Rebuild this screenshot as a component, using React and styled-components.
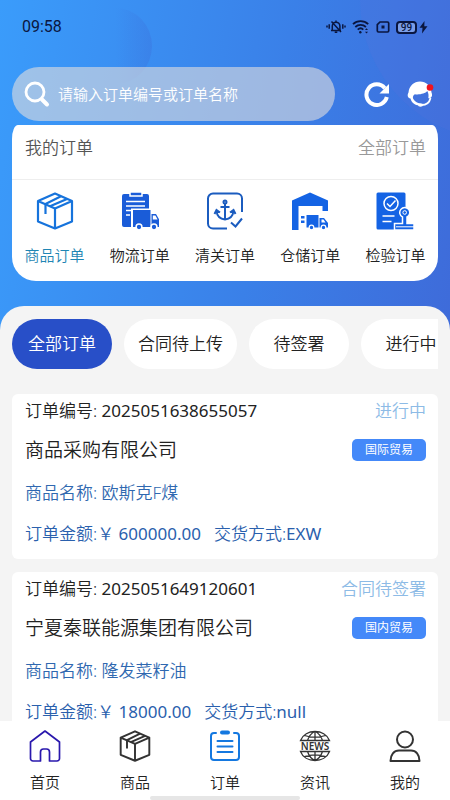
import styled, { createGlobalStyle } from "styled-components";
import { useState } from "react";

const SERVICES = [
  { label: "商品订单", Icon: BoxIcon },
  { label: "物流订单", Icon: LogisticsIcon },
  { label: "清关订单", Icon: CustomsIcon },
  { label: "仓储订单", Icon: WarehouseIcon },
  { label: "检验订单", Icon: InspectionIcon },
];

const FILTERS = ["全部订单", "合同待上传", "待签署", "进行中"];

const ORDERS = [
  {
    id: "2025051638655057",
    status: "进行中",
    company: "商品采购有限公司",
    trade: "国际贸易",
    goods: "欧斯克F煤",
    amount: "600000.00",
    delivery: "EXW",
  },
  {
    id: "2025051649120601",
    status: "合同待签署",
    company: "宁夏秦联能源集团有限公司",
    trade: "国内贸易",
    goods: "隆发菜籽油",
    amount: "18000.00",
    delivery: "null",
  },
];

const TABS = [
  { label: "首页", Icon: HomeIcon },
  { label: "商品", Icon: GoodsIcon },
  { label: "订单", Icon: OrderIcon },
  { label: "资讯", Icon: NewsIcon },
  { label: "我的", Icon: UserIcon },
];

const App = () => {
  const [service, setService] = useState(0);
  const [filter, setFilter] = useState(0);

  return (
    <Page>
      <GlobalStyle />
      <StatusBar />

      <Header>
        <SearchBox>
          <SearchIcon />
          <input
            type="text"
            aria-label="搜索订单"
            placeholder="请输入订单编号或订单名称"
          />
        </SearchBox>
        <IconButton aria-label="刷新">
          <RefreshIcon />
        </IconButton>
        <IconButton aria-label="客服">
          <ServiceIcon />
        </IconButton>
      </Header>

      <ServiceCard>
        <CardHead>
          <h2>我的订单</h2>
          <a href="#all">全部订单</a>
        </CardHead>
        <ServiceGrid>
          {SERVICES.map(({ label, Icon }, i) => (
            <ServiceButton
              key={label}
              $active={service === i}
              onClick={() => setService(i)}
            >
              <Icon />
              <span>{label}</span>
            </ServiceButton>
          ))}
        </ServiceGrid>
      </ServiceCard>

      <Panel>
        <Filters>
          {FILTERS.map((label, i) => (
            <Pill
              key={label}
              $active={filter === i}
              onClick={() => setFilter(i)}
            >
              {label}
            </Pill>
          ))}
        </Filters>
        <OrderList>
          {ORDERS.map((order) => (
            <Order key={order.id} order={order} />
          ))}
        </OrderList>
      </Panel>

      <TabBar>
        {TABS.map(({ label, Icon }) => (
          <Tab key={label} href={`#${label}`}>
            <Icon />
            <span>{label}</span>
          </Tab>
        ))}
        <HomeIndicator />
      </TabBar>
    </Page>
  );
};

const Order = ({ order }) => (
  <OrderCard>
    <NumberRow>
      <span>
        订单编号: <Value>{order.id}</Value>
      </span>
      <Status>{order.status}</Status>
    </NumberRow>
    <CompanyRow>
      <h3>{order.company}</h3>
      <Tag>{order.trade}</Tag>
    </CompanyRow>
    <GoodsRow>商品名称: {order.goods}</GoodsRow>
    <AmountRow>
      <span>
        订单金额:￥ <Value>{order.amount}</Value>
      </span>
      <span>
        交货方式:<Value>{order.delivery}</Value>
      </span>
    </AmountRow>
  </OrderCard>
);

const StatusBar = () => (
  <StyledStatusBar>
    <time>09:58</time>
    <div className="icons">
      <svg width="20" height="16" viewBox="0 0 20 16" fill="none" stroke="#0a1640" strokeWidth="1.5">
        <path d="M5 11.5h10M6.3 11V7a3.8 3.8 0 0 1 7.6 0v4M10 3V1.5M8.7 13.3h2.6M5.5 2.5l9.5 10.5M3.2 5.3v4.4M1 6.5v2M16.8 5.3v4.4M19 6.5v2" />
      </svg>
      <svg width="18" height="16" viewBox="0 0 18 16" fill="none" stroke="#0a1640" strokeWidth="1.8">
        <path d="M1 5.2c4.2-4 11-4 15.2 0M3.3 8c3-2.8 7.6-2.8 10.6 0M5.7 10.6c1.8-1.6 4-1.6 5.6 0" />
        <circle cx="8.3" cy="13.3" r="1.2" fill="#0a1640" stroke="none" />
        <path d="M13 11l1.5-1.8L16 11zM13 12.8l1.5 1.8 1.5-1.8z" fill="#0a1640" stroke="none" />
      </svg>
      <svg width="14" height="16" viewBox="0 0 14 16" fill="none" stroke="#0a1640" strokeWidth="1.7">
        <path d="M4 3h7.5a1.2 1.2 0 0 1 1.2 1.2v7.6a1.2 1.2 0 0 1-1.2 1.2h-9a1.2 1.2 0 0 1-1.2-1.2V5.7z" />
        <path d="M5.5 6.5h3v3h-3z" fill="#0a1640" stroke="none" />
      </svg>
      <Battery>99</Battery>
      <svg className="bolt" width="9" height="16" viewBox="0 0 9 16">
        <path d="M5.5 2L.5 8.800h3L3 14.5l5.5-7.3H5.3z" fill="#0a1640" />
      </svg>
    </div>
  </StyledStatusBar>
);

function SearchIcon() {
  return (
    <svg width="26" height="27" viewBox="0 0 26 27" fill="none" stroke="#fff" strokeLinecap="round">
      <circle cx="11" cy="11" r="9" strokeWidth="2.8" />
      <path d="M18 18.5l5 5" strokeWidth="4" />
    </svg>
  );
}

function RefreshIcon() {
  return (
    <svg width="26" height="26" viewBox="0 0 26 26">
      <path d="M20.8 7.2A10.3 10.3 0 1 0 22.8 16" fill="none" stroke="#fff" strokeWidth="4" />
      <path d="M25 3v9.5h-9.5z" fill="#fff" />
    </svg>
  );
}

function ServiceIcon() {
  return (
    <svg width="28" height="28" viewBox="0 0 28 28">
      <path
        d="M4.500 18.500C1.500 18 1 15 2.500 12.500 3 6 8 1.500 14 1.500s11 4 11.500 11c1 2 .8 4.500-1.200 5.500l-2 .3c.5-2.800.3-5-1-7.300-2 2.500-8 4-12.500 3.200C6.500 15.500 6.300 18 8 20c1.500 2 3.500 3 6 3.500l-1 2c-2-.3-3.500-.8-5-1.800-1.800-1.200-3-3-3.500-5.200z"
        fill="#fff"
      />
      <path d="M24.5 18c-1 4.500-4 7-9 7" fill="none" stroke="#fff" strokeWidth="1.8" />
      <ellipse cx="14.5" cy="25" rx="2.5" ry="1.7" fill="#fff" />
      <circle cx="24" cy="7.5" r="3.3" fill="#f0141e" />
    </svg>
  );
}

function Cube({ size, color, width }) {
  return (
    <svg width={size} height={size} viewBox="0 0 38 38" fill="none" stroke={color} strokeWidth={width} strokeLinejoin="round">
      <path d="M19 1.5L36 9v20.5l-17 7-17-7V9zM2 9l17 7.5L36 9M19 16.5v20" />
      <path d="M25 4.2L9.5 12v10M31 6.9L14 14.3" />
    </svg>
  );
}

function BoxIcon() {
  return <Cube size={38} color="#1673dc" width={2.2} />;
}

function GoodsIcon() {
  return <Cube size={32} color="#333" width={2.3} />;
}

function LogisticsIcon() {
  return (
    <svg width="38" height="38" viewBox="0 0 38 38" fill="#1a5cd8">
      <path d="M3 2h23a2 2 0 0 1 2 2v14H12v17H3a2 2 0 0 1-2-2V4a2 2 0 0 1 2-2z" />
      <path d="M9 0h12v4H9z" stroke="#fff" strokeWidth="1.5" />
      <path d="M5 9.5h19M5 14h19M5 18.5h5M5 23h4" stroke="#fff" strokeWidth="1.6" />
      <path d="M10 16.5h21V36H10z" fill="#fff" />
      <path d="M12 18h17.5v17H12zM30.5 22H35l3.5 6v7h-8z" />
      <path d="M31.8 23.5h2.6l2.2 4h-4.8z" fill="#fff" />
      <g stroke="#fff" strokeWidth="1.5">
        <circle cx="18" cy="35" r="2.9" />
        <circle cx="33" cy="35" r="2.9" />
      </g>
    </svg>
  );
}

function CustomsIcon() {
  return (
    <svg width="38" height="38" viewBox="0 0 38 38" fill="none" stroke="#1b5cbf" strokeWidth="2">
      <path d="M21 36.5H7a5 5 0 0 1-5-5V6.5a5 5 0 0 1 5-5h24a5 5 0 0 1 5 5V20" />
      <circle cx="19" cy="10" r="1.5" />
      <path d="M19 11.5V28.5M14.5 15h9M10.5 19c.5 5 3.5 8 8.5 8.500 5-.5 8-3.5 8.500-8.500M8.500 22l2-4 3.500 2.500M29.500 22l-2-4-3.500 2.500M25 30.500l4.500 4 6.500-8" />
    </svg>
  );
}

function WarehouseIcon() {
  return (
    <svg width="38" height="38" viewBox="0 0 38 38" fill="#1463e4">
      <path d="M1 8.5L19 .5l18 8V19h-5.5v-5H7.5v24H1z" />
      <path d="M10 24h3.5v2.5H10zM10 28.5h3.5v2.5H10zM15.5 23h12v12.5h-12zM28.5 26h4.5l4 5v4.5h-8.5z" />
      <path d="M30.5 27.5h2l2 3h-4z" fill="#fff" />
      <g stroke="#fff" strokeWidth="1.2">
        <circle cx="20.5" cy="35.5" r="2.3" />
        <circle cx="32.5" cy="35.5" r="2.3" />
      </g>
    </svg>
  );
}

function InspectionIcon() {
  return (
    <svg width="38" height="38" viewBox="0 0 38 38" fill="#1463e4">
      <path d="M2 .5h26a1.500 1.500 0 0 1 1.500 1.500v35.500H2A1.500 1.500 0 0 1 .5 36V2A1.500 1.500 0 0 1 2 .5z" />
      <g fill="none" stroke="#fff" strokeWidth="1.5">
        <circle cx="15" cy="11.5" r="7" />
        <path d="M11 11.5l3 3 5.500-6M6.5 24h12M6.5 29.5h9" />
      </g>
      <path d="M26.5 25a5 5 0 1 1 4.500 0v6.500h7V38H18.500v-6.500h8z" stroke="#fff" strokeWidth="1.5" />
      <circle cx="28.7" cy="20.5" r="1.8" fill="none" stroke="#fff" />
      <path d="M20 34.8h18" stroke="#fff" />
    </svg>
  );
}

function HomeIcon() {
  return (
    <svg width="32" height="32" viewBox="0 0 32 32" fill="none" stroke="#2a18ad" strokeWidth="1.7" strokeLinejoin="round">
      <path d="M16 1L1.5 12v16.5a2.5 2.5 0 0 0 2.5 2.5h7.5V22a3 3 0 0 1 3-3h3a3 3 0 0 1 3 3v9H28a2.5 2.5 0 0 0 2.5-2.5V12z" />
    </svg>
  );
}

function OrderIcon() {
  return (
    <svg width="32" height="32" viewBox="0 0 32 32" fill="none" stroke="#1478e0" strokeWidth="2" strokeLinecap="round">
      <path d="M7 3H5a3 3 0 0 0-3 3v21a3 3 0 0 0 3 3h22a3 3 0 0 0 3-3V6a3 3 0 0 0-3-3h-2" />
      <path d="M13 2.5h6" strokeWidth="4" />
      <path d="M8.5 11h15M8.5 16.5h15M8.5 22h15" />
    </svg>
  );
}

function NewsIcon() {
  return (
    <svg width="32" height="32" viewBox="0 0 32 32" fill="none" stroke="#333" strokeWidth="1.3">
      <path d="M1.5 10.5C6-1.5 26-1.5 30.5 10.5zM1.5 21.5c4.5 12 24.5 12 29 0zM16 1.5v9M16 21.5v9M8.5 10.5C10 6 12.5 3 16 1.5c3.5 1.5 6 4.5 7.5 9M8.5 21.5c1.5 4.5 4 7.5 7.5 9 3.5-1.5 6-4.5 7.5-9M5.5 5.5c6 2 15 2 21 0M5.5 26.5c6-2 15-2 21 0" />
      <text x="16" y="20" textAnchor="middle" fontSize="10" fontWeight="600" fontFamily="Noto Sans, sans-serif" fill="#333" stroke="none">
        NEWS
      </text>
    </svg>
  );
}

function UserIcon() {
  return (
    <svg width="32" height="32" viewBox="0 0 32 32" fill="none" stroke="#333" strokeWidth="2" strokeLinejoin="round">
      <circle cx="16" cy="9.5" r="8" />
      <path d="M1.5 31c0-6.5 3.5-10.5 8.5-10.5h12c5 0 8.5 4 8.5 10.5z" />
    </svg>
  );
}

const GlobalStyle = createGlobalStyle`
  * {
    box-sizing: border-box;
    margin: 0;
    padding: 0;
  }

  body {
    font-family: "Noto Sans", "Noto Sans CJK SC", sans-serif;
    font-weight: 350;
    color: #222;
  }

  button {
    border: none;
    background: none;
    font: inherit;
    color: inherit;
    cursor: pointer;
  }

  a {
    color: inherit;
    text-decoration: none;
  }

  h2,
  h3 {
    font-weight: inherit;
  }

  svg {
    display: block;
    flex-shrink: 0;
  }
`;

const Page = styled.div`
  position: relative;
  isolation: isolate;
  display: flex;
  flex-direction: column;
  height: 100vh;
  overflow: hidden;
  background: linear-gradient(100deg, #3a9cfb 0%, #3a80e8 50%, #4063d4 100%);

  /* soft bubbles behind the header */
  &::before,
  &::after {
    content: "";
    position: absolute;
    z-index: -1;
    border-radius: 50%;
  }

  &::before {
    top: 8px;
    left: 80px;
    width: 72px;
    height: 76px;
    background: linear-gradient(
      to right,
      transparent 50%,
      rgba(60, 105, 215, 0.3)
    );
  }

  &::after {
    top: -140px;
    right: -190px;
    width: 280px;
    height: 280px;
    background: rgba(90, 115, 220, 0.2);
  }
`;

const StyledStatusBar = styled.div`
  display: flex;
  align-items: center;
  justify-content: space-between;
  height: 54px;
  padding: 0 22px;
  color: #0a1640;

  time {
    font-family: Roboto, sans-serif;
    font-weight: 400;
    font-size: 16px;
    line-height: 24px;
  }

  .icons {
    display: flex;
    align-items: center;
    gap: 6px;
  }

  .bolt {
    margin-left: -4px;
  }
`;

const Battery = styled.span`
  width: 21px;
  height: 13px;
  border: 2px solid #0a1640;
  border-radius: 4px;
  background: rgba(255, 255, 255, 0.3);
  font-family: Roboto, sans-serif;
  font-weight: 500;
  font-size: 10px;
  line-height: 10px;
  text-align: center;
`;

const Header = styled.header`
  display: flex;
  align-items: center;
  padding: 13px 16px 4px 12px;
`;

const SearchBox = styled.label`
  display: flex;
  align-items: center;
  flex: 1;
  gap: 8px;
  height: 54px;
  margin-right: 13px;
  padding: 0 12px;
  border-radius: 27px;
  background: rgba(225, 222, 222, 0.6);

  input {
    flex: 1;
    min-width: 0;
    border: none;
    outline: none;
    background: none;
    color: #fff;
    font: inherit;
    font-size: 15px;
    line-height: 24px;

    &::placeholder {
      color: #fff;
      opacity: 1;
    }
  }
`;

const IconButton = styled.button`
  margin-left: 16px;
`;

const ServiceCard = styled.section`
  flex-shrink: 0;
  margin: 0 12px 25px;
  border-radius: 6px 6px 24px 24px / 14px 14px 24px 24px;
  background: #fff;
`;

const CardHead = styled.div`
  display: flex;
  justify-content: space-between;
  height: 55px;
  padding: 10px 12px 0 13px;
  border-bottom: 1px solid #eee;
  font-size: 17px;
  line-height: 26px;

  h2 {
    color: #555;
    font-size: 17px;
  }

  a {
    color: #999;
  }
`;

const ServiceGrid = styled.div`
  display: grid;
  grid-template-columns: repeat(5, 1fr);
  padding: 12px 0 14px;
`;

const ServiceButton = styled.button`
  display: flex;
  flex-direction: column;
  align-items: center;
  gap: 13px;
  color: ${({ $active }) => ($active ? "#1f86b4" : "#222")};
  font-size: 15px;
  line-height: 24px;
`;

const Panel = styled.main`
  display: flex;
  flex-direction: column;
  flex: 1;
  gap: 25px;
  min-height: 0;
  padding: 13px 12px 0;
  border-radius: 24px 24px 0 0;
  background: #f4f4f4;
`;

const Filters = styled.div`
  display: flex;
  flex-shrink: 0;
  gap: 12px;
  overflow-x: auto;
  scrollbar-width: none;
`;

const Pill = styled.button`
  flex-shrink: 0;
  min-width: 100px;
  height: 50px;
  padding: 0 14px;
  border-radius: 25px;
  background: ${({ $active }) => ($active ? "#284fc8" : "#fff")};
  color: ${({ $active }) => ($active ? "#fff" : "#222")};
  font-size: 17px;
  line-height: 26px;
`;

const OrderList = styled.div`
  display: flex;
  flex-direction: column;
  gap: 13px;
  min-height: 0;
  overflow-y: auto;
  scrollbar-width: none;
`;

const OrderCard = styled.article`
  flex-shrink: 0;
  padding: 0 12px 5px 13px;
  border-radius: 6px;
  background: #fff;
  font-size: 17px;
`;

const Row = styled.div`
  display: flex;
  align-items: center;
  line-height: 26px;
  white-space: nowrap;
`;

const NumberRow = styled(Row)`
  justify-content: space-between;
  height: 34px;
`;

const CompanyRow = styled(Row)`
  justify-content: space-between;
  height: 44px;

  h3 {
    font-size: 19px;
  }
`;

const GoodsRow = styled(Row)`
  height: 42px;
  color: #2f68b0;
`;

const AmountRow = styled(Row)`
  gap: 13px;
  height: 40px;
  color: #2a60ad;
`;

const Value = styled.span`
  font-weight: 400;
`;

const Status = styled.span`
  color: #8dbbe6;
`;

const Tag = styled.span`
  padding: 0 13px;
  border-radius: 5px;
  background: #4489f9;
  color: #fff;
  font-weight: 400;
  font-size: 12px;
  line-height: 22px;
`;

const TabBar = styled.nav`
  position: relative;
  display: grid;
  grid-template-columns: repeat(5, 1fr);
  flex-shrink: 0;
  height: 79px;
  padding-top: 9px;
  background: #fff;
`;

const Tab = styled.a`
  display: flex;
  flex-direction: column;
  align-items: center;
  gap: 8px;
  font-size: 15px;
  line-height: 24px;
`;

const HomeIndicator = styled.div`
  position: absolute;
  bottom: 0;
  left: 33.33%;
  width: 33.33%;
  height: 4px;
  border-radius: 2px;
  background: #e6e6e6;
`;

export default App;
